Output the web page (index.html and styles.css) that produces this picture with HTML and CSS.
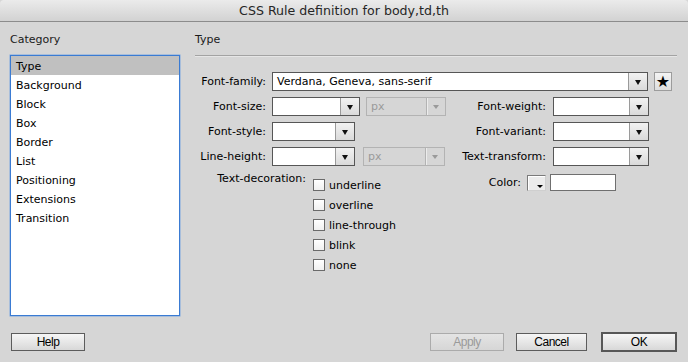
FILE: index.html
```html
<!DOCTYPE html>
<html>
<head>
<meta charset="utf-8">
<title>CSS Rule definition</title>
<link rel="stylesheet" href="styles.css">
</head>
<body>
<div class="dialog">
  <div class="titlebar">CSS Rule definition for body,td,th</div>
  <div class="main">
    <div class="cat">
      <div class="heading">Category</div>
      <ul class="list">
        <li class="sel">Type</li>
        <li>Background</li>
        <li>Block</li>
        <li>Box</li>
        <li>Border</li>
        <li>List</li>
        <li>Positioning</li>
        <li>Extensions</li>
        <li>Transition</li>
      </ul>
    </div>
    <div class="panel">
      <div class="heading">Type</div>
      <div class="rule"></div>
      <div class="form">
        <div class="row">
          <span class="lbl">Font-family:</span>
          <div class="select w-family"><span class="val">Verdana, Geneva, sans-serif</span><span class="arrow"><i class="tri"></i></span></div>
          <div class="star">★</div>
        </div>
        <div class="row">
          <div class="left">
            <span class="lbl">Font-size:</span>
            <div class="select w88"><span class="val"></span><span class="arrow"><i class="tri"></i></span></div>
            <div class="select unit w80"><span class="val">px</span><span class="arrow"><i class="tri"></i></span></div>
          </div>
          <div class="right">
            <span class="rlbl">Font-weight:</span>
            <div class="select w96"><span class="val"></span><span class="arrow"><i class="tri"></i></span></div>
          </div>
        </div>
        <div class="row">
          <div class="left">
            <span class="lbl">Font-style:</span>
            <div class="select w83"><span class="val"></span><span class="arrow"><i class="tri"></i></span></div>
          </div>
          <div class="right">
            <span class="rlbl">Font-variant:</span>
            <div class="select w96"><span class="val"></span><span class="arrow"><i class="tri"></i></span></div>
          </div>
        </div>
        <div class="row">
          <div class="left">
            <span class="lbl">Line-height:</span>
            <div class="select w83"><span class="val"></span><span class="arrow"><i class="tri"></i></span></div>
            <div class="select unit w82"><span class="val">px</span><span class="arrow"><i class="tri"></i></span></div>
          </div>
          <div class="right">
            <span class="rlbl">Text-transform:</span>
            <div class="select w96"><span class="val"></span><span class="arrow"><i class="tri"></i></span></div>
          </div>
        </div>
        <div class="row5">
          <div class="left deco">
            <span class="dlbl">Text-decoration:</span>
            <ul class="checks">
              <li><span class="box"></span>underline</li>
              <li><span class="box"></span>overline</li>
              <li><span class="box"></span>line-through</li>
              <li><span class="box"></span>blink</li>
              <li><span class="box"></span>none</li>
            </ul>
          </div>
          <div class="colorgrp">
            <span class="clbl">Color:</span>
            <span class="swatch"><i class="stri"></i></span>
            <span class="cinput"></span>
          </div>
        </div>
      </div>
    </div>
  </div>
  <div class="footer">
    <div class="btn w74">Help</div>
    <div class="spacer"></div>
    <div class="btn w74 disabled">Apply</div>
    <div class="btn w71 cancel">Cancel</div>
    <div class="btn ok">OK</div>
  </div>
</div>
</body>
</html>
```

FILE: styles.css
```css
html, body {
  margin: 0;
  padding: 0;
}
body {
  width: 688px;
  height: 362px;
  overflow: hidden;
  background: #d6d6d6;
  font-family: "DejaVu Sans", Verdana, sans-serif;
  font-size: 11px;
  color: #000;
}
.dialog {
  width: 688px;
  height: 362px;
  display: flex;
  flex-direction: column;
}
.titlebar {
  height: 21px;
  line-height: 22px;
  border-bottom: 1px solid #8c8c8c;
  background: linear-gradient(#ebebeb, #d2d2d2);
  text-align: center;
  font-size: 12.6px;
  color: #262626;
  border-radius: 4px 4px 0 0;
}
.main {
  display: flex;
  height: 294px;
}
.cat {
  margin-left: 10px;
  width: 170px;
}
.heading {
  margin-top: 11px;
  height: 14px;
  line-height: 14px;
  color: #1a1a1a;
}
.list {
  list-style: none;
  margin: 8px 0 0 0;
  padding: 0;
  height: 259px;
  border: 1px solid #3a7bd3;
  box-shadow: 0 0 0 0.5px #7aa6e0;
  background: #fff;
}
.list li {
  height: 17px;
  padding-top: 2px;
  line-height: 17px;
  padding-left: 5px;
}
.list li.sel {
  background: #c0c0c0;
}
.panel {
  margin-left: 15px;
  width: 482px;
}
.rule {
  margin-top: 8px;
  height: 1px;
  background: #a3a3a3;
  border-bottom: 1px solid #e6e6e6;
}
.form {
  margin-top: 15px;
  display: flex;
  flex-direction: column;
  gap: 6px;
}
.row {
  display: flex;
  align-items: center;
  height: 19px;
}
.left {
  display: flex;
  align-items: center;
  width: 251px;
}
.right {
  display: flex;
  align-items: center;
}
.lbl {
  width: 71px;
  text-align: right;
  margin-right: 6px;
  white-space: nowrap;
}
.rlbl {
  width: 100px;
  text-align: right;
  margin-right: 7px;
  white-space: nowrap;
}
.select {
  box-sizing: border-box;
  height: 19px;
  border: 1px solid #565656;
  background: #fff;
  display: flex;
}
.select .val {
  flex: 1;
  line-height: 17px;
  padding-left: 4px;
  white-space: nowrap;
  overflow: hidden;
}
.select .arrow {
  width: 18px;
  border-left: 1px solid #9a9a9a;
  background: linear-gradient(#f2f2f2, #dadada);
  display: flex;
  align-items: center;
  justify-content: center;
}
.tri {
  display: block;
  width: 0;
  height: 0;
  border-left: 3.5px solid transparent;
  border-right: 3.5px solid transparent;
  border-top: 5px solid #111;
  margin-top: 1px;
}
.select.unit {
  background: transparent;
  border-color: #b3b3b3;
  color: #9a9a9a;
  margin-left: 6px;
}
.select.unit .arrow {
  background: transparent;
  border-left: 1px solid #b3b3b3;
  box-shadow: inset 1px 0 0 #ececec;
}
.select.unit .tri {
  border-top-color: #9a9a9a;
  border-left-width: 3px;
  border-right-width: 3px;
  border-top-width: 4px;
}
.w-family { width: 376px; }
.w88 { width: 88px; }
.w83 { width: 83px; }
.w80 { width: 80px; }
.w82 { width: 82px; margin-left: 8px !important; }
.w96 { width: 96px; }
.star {
  box-sizing: border-box;
  width: 18px;
  height: 19px;
  margin-left: 6px;
  border: 1px solid #9c9c9c;
  background: linear-gradient(#f4f4f4, #dedede);
  text-align: center;
  line-height: 17px;
  font-size: 16px;
  color: #000;
}
.row5 {
  display: flex;
  margin-top: 3px;
}
.deco {
  align-items: flex-start;
}
.dlbl {
  width: 111px;
  text-align: right;
  margin-right: 7px;
  margin-top: -3px;
  line-height: 14px;
  white-space: nowrap;
}
.checks {
  list-style: none;
  margin: 0;
  padding: 0;
}
.checks li {
  height: 20px;
  display: flex;
  align-items: center;
}
.box {
  box-sizing: border-box;
  width: 12px;
  height: 12px;
  border: 1px solid #6a6a6a;
  background: linear-gradient(#ffffff, #f0f0f0);
  margin-right: 4px;
}
.colorgrp {
  display: flex;
  align-items: center;
  height: 17px;
  margin-top: -1px;
}
.clbl {
  width: 75px;
  text-align: right;
  margin-right: 6px;
}
.swatch {
  box-sizing: border-box;
  width: 19px;
  height: 16px;
  border: 1px solid #7a7a7a;
  border-right-color: #cfcfcf;
  border-bottom-color: #cfcfcf;
  background: #ececec;
  box-shadow: inset 1px 1px 0 #fff;
  display: flex;
  align-items: flex-end;
  justify-content: flex-end;
  padding: 0 2px 2px 0;
}
.stri {
  display: block;
  width: 0;
  height: 0;
  border-left: 3px solid transparent;
  border-right: 3px solid transparent;
  border-top: 3px solid #000;
}
.cinput {
  box-sizing: border-box;
  width: 66px;
  height: 17px;
  margin-left: 4px;
  border: 1px solid #6f6f6f;
  background: #fff;
}
.footer {
  display: flex;
  align-items: center;
  height: 20px;
  margin-top: 16px;
  padding: 0 11px 0 11px;
}
.spacer {
  flex: 1;
}
.btn {
  box-sizing: border-box;
  height: 18px;
  border: 1px solid #5c5c5c;
  background: linear-gradient(#f6f6f6, #d8d8d8);
  text-align: center;
  line-height: 16px;
  font-family: "Liberation Sans", Arial, sans-serif;
  font-size: 12px;
  letter-spacing: -0.5px;
  color: #000;
}
.w74 { width: 74px; }
.w71 { width: 71px; }
.btn.disabled {
  border-color: #ababab;
  color: #9a9a9a;
  background: linear-gradient(#e4e4e4, #d6d6d6);
}
.cancel {
  margin-left: 12px;
}
.btn.ok {
  width: 76px;
  height: 20px;
  border: 2px solid #575757;
  line-height: 16px;
  margin-left: 14px;
}
```
